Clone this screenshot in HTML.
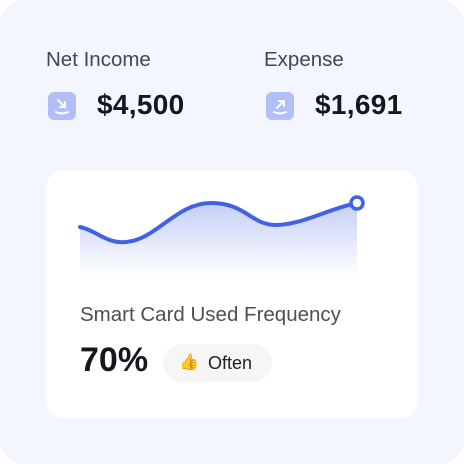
<!DOCTYPE html>
<html><head><style>
body{margin:0;width:464px;height:464px;background:#fff;font-family:"Liberation Sans",sans-serif;}
.card{position:absolute;left:0;top:0;width:464px;height:464px;border-radius:24px;background:#f3f6fe;}
.lbl{position:absolute;font-size:20.5px;color:#45464f;top:48px;}
.ic{position:absolute;width:28px;height:28px;border-radius:6px;background:#b2bef6;top:92px;}
.amt{position:absolute;font-size:28px;font-weight:bold;color:#16171d;top:89px;letter-spacing:0.3px}
.inner{position:absolute;left:46px;top:170px;width:372px;height:248px;background:#fff;border-radius:18px;}
</style></head><body>
<div class="card">
<div class="lbl" style="left:46px">Net Income</div>
<div class="lbl" style="left:264px">Expense</div>
<div class="ic" style="left:48px"><svg width="28" height="28" viewBox="0 0 28 28" fill="none" stroke="#fff" stroke-width="2" stroke-linecap="round"><path d="M10 8l7 7M17 10v5h-5M8 20q6 3 12 0"/></svg></div>
<div class="amt" style="left:97px">$4,500</div>
<div class="ic" style="left:266px"><svg width="28" height="28" viewBox="0 0 28 28" fill="none" stroke="#fff" stroke-width="2" stroke-linecap="round"><path d="M11 16l7-7M13 9h5v5M8 20q6 3 12 0"/></svg></div>
<div class="amt" style="left:315px">$1,691</div>
<div class="inner">
<svg width="372" height="120" style="position:absolute;left:0;top:0">
<defs><linearGradient id="g" x1="0" y1="0" x2="0" y2="1"><stop offset="0" stop-color="#c5cff6"/><stop offset="1" stop-color="#fff"/></linearGradient></defs>
<path d="M34 57C50 60 60 74 80 72C110 70 130 33 165 33C200 33 205 55 230 55C255 55 285 38 311 33L311 106L34 106Z" fill="url(#g)"/>
<path d="M34 57C50 60 60 74 80 72C110 70 130 33 165 33C200 33 205 55 230 55C255 55 285 38 311 33" fill="none" stroke="#4262e6" stroke-width="4" stroke-linecap="round"/>
<circle cx="311" cy="33" r="6" fill="#fff" stroke="#4262e6" stroke-width="3.5"/>
</svg>
<div style="position:absolute;left:34px;top:133px;font-size:20.5px;color:#4d4e57;">Smart Card Used Frequency</div>
<div style="position:absolute;left:34px;top:171px;font-size:34px;font-weight:bold;color:#16171d;">70%</div>
<div style="position:absolute;left:117px;top:174px;width:109px;height:38px;border-radius:19px;background:#f6f6f7;font-size:18px;color:#222;line-height:38px"><span style="position:absolute;left:16px;font-size:16px">👍</span><span style="position:absolute;left:45px">Often</span></div>
</div>
</div>
</body></html>
